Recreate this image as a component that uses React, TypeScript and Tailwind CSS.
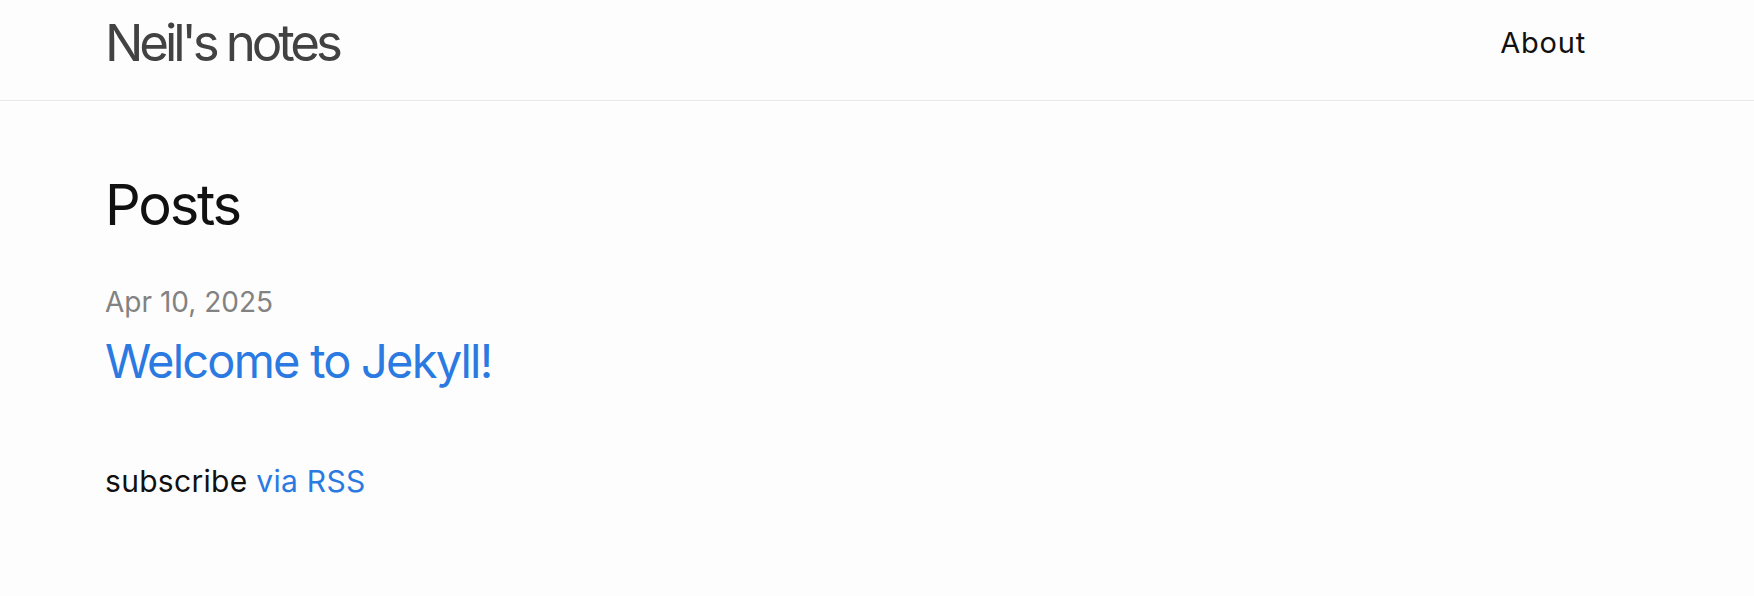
import React from 'react'

const posts = [{ date: 'Apr 10, 2025', title: 'Welcome to Jekyll!' }]

export default function App() {
  return (
    <div className="min-h-screen bg-[#fdfdfd] text-[#111] font-['Inter','Liberation_Sans',sans-serif]">
      {/* Site header */}
      <header className="h-[101px] border-b border-[#e8e8e8]">
        <div className="flex items-start justify-between pl-[105px] pr-[168px]">
          <a className="pt-[17px] text-[51px] leading-none tracking-[-4.1px] text-[#424242]">Neil's notes</a>
          <nav className="pt-[28px]">
            <a className="text-[29px] leading-none tracking-[0.8px] text-[#111]">About</a>
          </nav>
        </div>
      </header>

      {/* Home */}
      <main className="pl-[105px] pt-[76px]">
        <h2 className="text-[56px] leading-none tracking-[-2.2px]">Posts</h2>
        <ul className="mt-[55px]">
          {posts.map((post) => (
            <li key={post.title}>
              <span className="block text-[28px] leading-none text-[#828282]">{post.date}</span>
              <a className="mt-[21px] block text-[47px] leading-none tracking-[-1.8px] text-[#2a7ae2]">{post.title}</a>
            </li>
          ))}
        </ul>
        <p className="mt-[82px] text-[30px] leading-none tracking-[0.3px]">
          subscribe <a className="text-[#2a7ae2]">via RSS</a>
        </p>
      </main>
    </div>
  )
}
